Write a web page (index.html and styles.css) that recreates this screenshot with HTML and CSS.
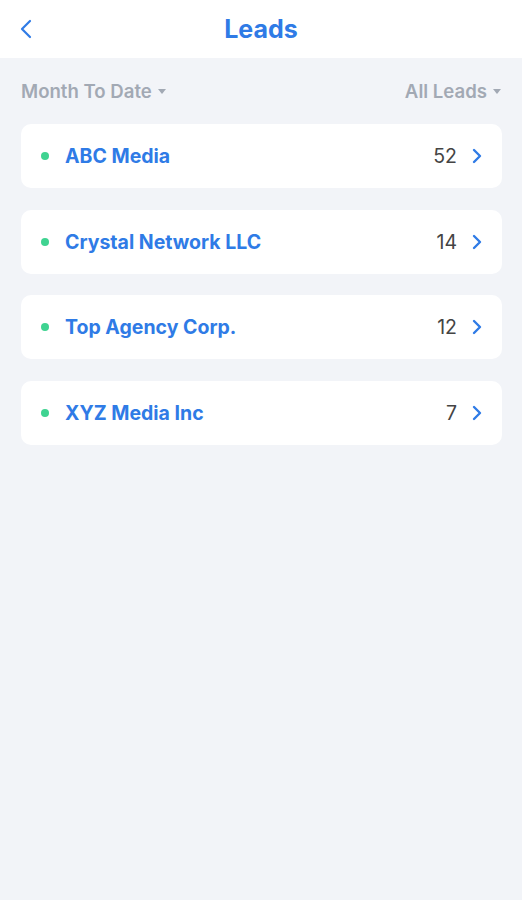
FILE: index.html
```html
<!DOCTYPE html>
<html lang="en">
<head>
    <meta charset="UTF-8">
    <meta name="viewport" content="width=device-width, initial-scale=1.0">
    <title>Leads</title>
    <link rel="stylesheet" href="styles.css">
</head>
<body>
    <header class="top_bar">
        <a class="back_btn" href="#">
            <svg width="14" height="20" viewBox="0 0 14 20"><path d="M11 2 L3 10 L11 18" fill="none" stroke="#2f7be6" stroke-width="2.2" stroke-linecap="round" stroke-linejoin="round"/></svg>
        </a>
        <h1>Leads</h1>
    </header>

    <div class="filters">
        <span class="filter">Month To Date <i class="caret"></i></span>
        <span class="filter">All Leads <i class="caret"></i></span>
    </div>

    <ul class="lead_list">
        <li class="lead_card">
            <span class="dot"></span>
            <span class="lead_name">ABC Media</span>
            <span class="lead_count">52</span>
            <svg class="chev" width="10" height="16" viewBox="0 0 10 16"><path d="M2 2 L8 8 L2 14" fill="none" stroke="#2f7be6" stroke-width="2.4" stroke-linecap="round" stroke-linejoin="round"/></svg>
        </li>
        <li class="lead_card">
            <span class="dot"></span>
            <span class="lead_name">Crystal Network LLC</span>
            <span class="lead_count">14</span>
            <svg class="chev" width="10" height="16" viewBox="0 0 10 16"><path d="M2 2 L8 8 L2 14" fill="none" stroke="#2f7be6" stroke-width="2.4" stroke-linecap="round" stroke-linejoin="round"/></svg>
        </li>
        <li class="lead_card">
            <span class="dot"></span>
            <span class="lead_name">Top Agency Corp.</span>
            <span class="lead_count">12</span>
            <svg class="chev" width="10" height="16" viewBox="0 0 10 16"><path d="M2 2 L8 8 L2 14" fill="none" stroke="#2f7be6" stroke-width="2.4" stroke-linecap="round" stroke-linejoin="round"/></svg>
        </li>
        <li class="lead_card">
            <span class="dot"></span>
            <span class="lead_name">XYZ Media Inc</span>
            <span class="lead_count">7</span>
            <svg class="chev" width="10" height="16" viewBox="0 0 10 16"><path d="M2 2 L8 8 L2 14" fill="none" stroke="#2f7be6" stroke-width="2.4" stroke-linecap="round" stroke-linejoin="round"/></svg>
        </li>
    </ul>
</body>
</html>
```
FILE: styles.css
```css
*, *:after, *:before {
    box-sizing: border-box;
}

body {
    margin: 0;
    font-family: Inter, Roboto, "Liberation Sans", sans-serif;
    background: #f2f4f8;
    min-height: 100vh;
}

.top_bar {
    height: 58px;
    background: #fff;
    display: flex;
    align-items: center;
    justify-content: center;
    position: relative;
}

.back_btn {
    position: absolute;
    left: 19px;
    top: 19px;
    display: block;
    line-height: 0;
}

.top_bar h1 {
    margin: 0;
    font-size: 25px;
    font-weight: 700;
    color: #2f7be6;
}

.filters {
    display: flex;
    justify-content: space-between;
    padding: 20px 21px 0 21px;
    height: 66px;
}

.filter {
    font-size: 18.6px;
    font-weight: 600;
    color: #a2a9b4;
    display: flex;
    align-items: center;
    height: 26px;
}

.caret {
    width: 0;
    height: 0;
    margin-left: 6px;
    border-left: 4.5px solid transparent;
    border-right: 4.5px solid transparent;
    border-top: 5px solid #a2a9b4;
}

.lead_list {
    list-style: none;
    margin: 0;
    padding: 0 20px 0 21px;
    display: flex;
    flex-direction: column;
    gap: 21.7px;
}

.lead_card {
    background: #fff;
    border-radius: 10px;
    height: 64px;
    display: flex;
    align-items: center;
    padding: 0 20px;
}

.dot {
    width: 8px;
    height: 8px;
    border-radius: 50%;
    background: #3fd391;
    margin-right: 16px;
}

.lead_name {
    flex: 1;
    font-size: 19.5px;
    font-weight: 700;
    color: #2f7be6;
}

.lead_count {
    font-size: 19.5px;
    color: #444;
    margin-right: 15px;
}

.chev {
    display: block;
}
```
